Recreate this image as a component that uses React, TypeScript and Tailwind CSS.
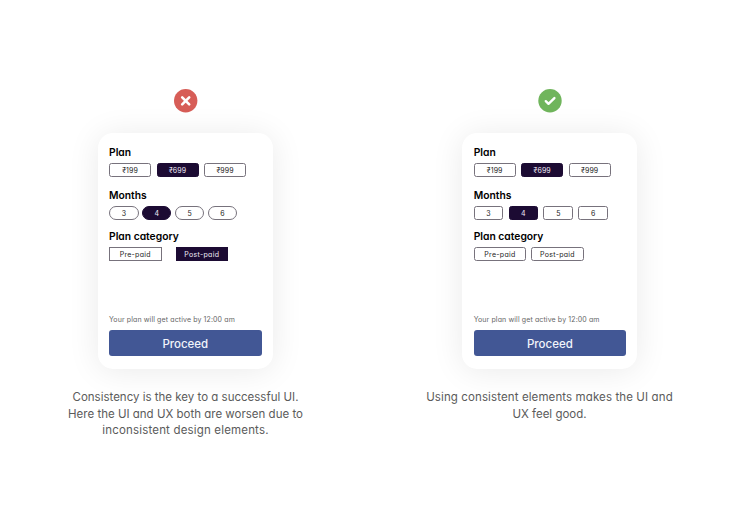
import React from 'react';
import clsx from 'clsx';

type Shape = 'rounded' | 'pill' | 'square';

interface ChipProps { label: string; active?: boolean; shape?: Shape; className?: string; }

const Chip = ({ label, active, shape = 'rounded', className }: ChipProps) => (
    <div
        className={clsx(
            'flex h-[14px] shrink-0 items-center justify-center border pt-px text-[7px] leading-none',
            active ? 'border-[#1c0b33] bg-[#1c0b33] text-[#f1ebf7]' : 'border-[#77727c] bg-white text-[#222]',
            shape === 'rounded' && 'rounded-[2.5px]',
            shape === 'pill' && 'rounded-full',
            className,
        )}
    >
        {label}
    </div>
);

const Title = ({ children }: { children: React.ReactNode }) => (
    <h3 className="h-[15px] text-[10.3px] leading-[15px] font-semibold whitespace-nowrap text-black">{children}</h3>
);

const PlanCard = ({ consistent }: { consistent: boolean }) => (
    <div
        className={clsx(
            'mt-[20px] flex h-[236px] w-[175px] flex-col rounded-[15px] bg-white pt-[12px] shadow-[0_2px_32px_rgba(0,0,0,0.085)]',
            consistent ? 'pr-[11px] pl-[11.7px]' : 'pr-[11.4px] pl-[11px]',
        )}
    >
        <Title>Plan</Title>
        <div className="mt-[3px] flex gap-[5.5px] tracking-[0.1px]">
            <Chip label="₹199" className="w-[42px]" />
            <Chip label="₹699" active className="w-[42px]" />
            <Chip label="₹999" className="w-[42px]" />
        </div>

        <div className="mt-[11px]"><Title>Months</Title></div>
        <div className={clsx('mt-[3px] flex', consistent ? 'gap-[5.3px]' : 'gap-[3.3px]')}>
            {['3', '4', '5', '6'].map((m) => (
                <Chip key={m} label={m} active={m === '4'} shape={consistent ? 'rounded' : 'pill'} className="w-[29.6px]" />
            ))}
        </div>

        <div className="mt-[9px]"><Title>Plan category</Title></div>
        <div className={clsx('mt-[3px] flex tracking-[0.3px]', consistent ? 'gap-[5px]' : 'gap-[14px]')}>
            <Chip label="Pre-paid" shape={consistent ? 'rounded' : 'square'} className="w-[52.5px]" />
            <Chip label="Post-paid" active={!consistent} shape={consistent ? 'rounded' : 'square'} className="w-[52.5px]" />
        </div>

        <p className="mt-[54px] h-[10px] text-[7px] leading-[10px] tracking-[0.12px] whitespace-nowrap text-[#666]">
            Your plan will get active by 12:00 am
        </p>
        <button className="mt-[5px] h-[26px] w-full rounded-[3px] bg-[#425795] pt-px text-[11.5px] leading-[26px] font-medium text-[#f1f4fb]">
            Proceed
        </button>
    </div>
);

const CrossBadge = () => (
    <svg width="24" height="24" viewBox="0 0 24 24" fill="none">
        <circle cx="11.7" cy="11.8" r="11.7" fill="#d75d57" />
        <path d="M8.2 8.4l7 7M15.2 8.4l-7 7" stroke="#fff" strokeWidth="2.6" strokeLinecap="round" />
    </svg>
);

const CheckBadge = () => (
    <svg width="24" height="24" viewBox="0 0 24 24" fill="none">
        <circle cx="12" cy="11.8" r="11.7" fill="#70b55c" />
        <path d="M7.8 12.2l2.7 2.6 5.9-5.7" stroke="#fff" strokeWidth="2.4" strokeLinecap="round" strokeLinejoin="round" />
    </svg>
);

interface CaptionLine { text: string; className?: string; }

const Caption = ({ lines }: { lines: CaptionLine[] }) => (
    <p className="mt-[20px] text-center text-[11.5px] leading-[16.7px] whitespace-nowrap text-[#5b5b5b]">
        {lines.map((line) => <span key={line.text} className={clsx('block', line.className)}>{line.text}</span>)}
    </p>
);

export default function App() {
    return (
        <main className="flex h-[525px] w-[736px] overflow-hidden bg-white pt-[89px] pl-[3px] font-['Inter',sans-serif] [font-feature-settings:'cv11']">
            <section className="flex w-[365px] flex-col items-center">
                <CrossBadge />
                <PlanCard consistent={false} />
                <Caption
                    lines={[
                        { text: 'Consistency is the key to a successful UI.' },
                        { text: 'Here the UI and UX both are worsen due to' },
                        { text: 'inconsistent design elements.', className: 'tracking-[0.17px]' },
                    ]}
                />
            </section>
            <section className="flex w-[363px] flex-col items-center">
                <CheckBadge />
                <PlanCard consistent />
                <Caption
                    lines={[
                        { text: 'Using consistent elements makes the UI and', className: 'tracking-[0.11px]' },
                        { text: 'UX feel good.' },
                    ]}
                />
            </section>
        </main>
    );
}
